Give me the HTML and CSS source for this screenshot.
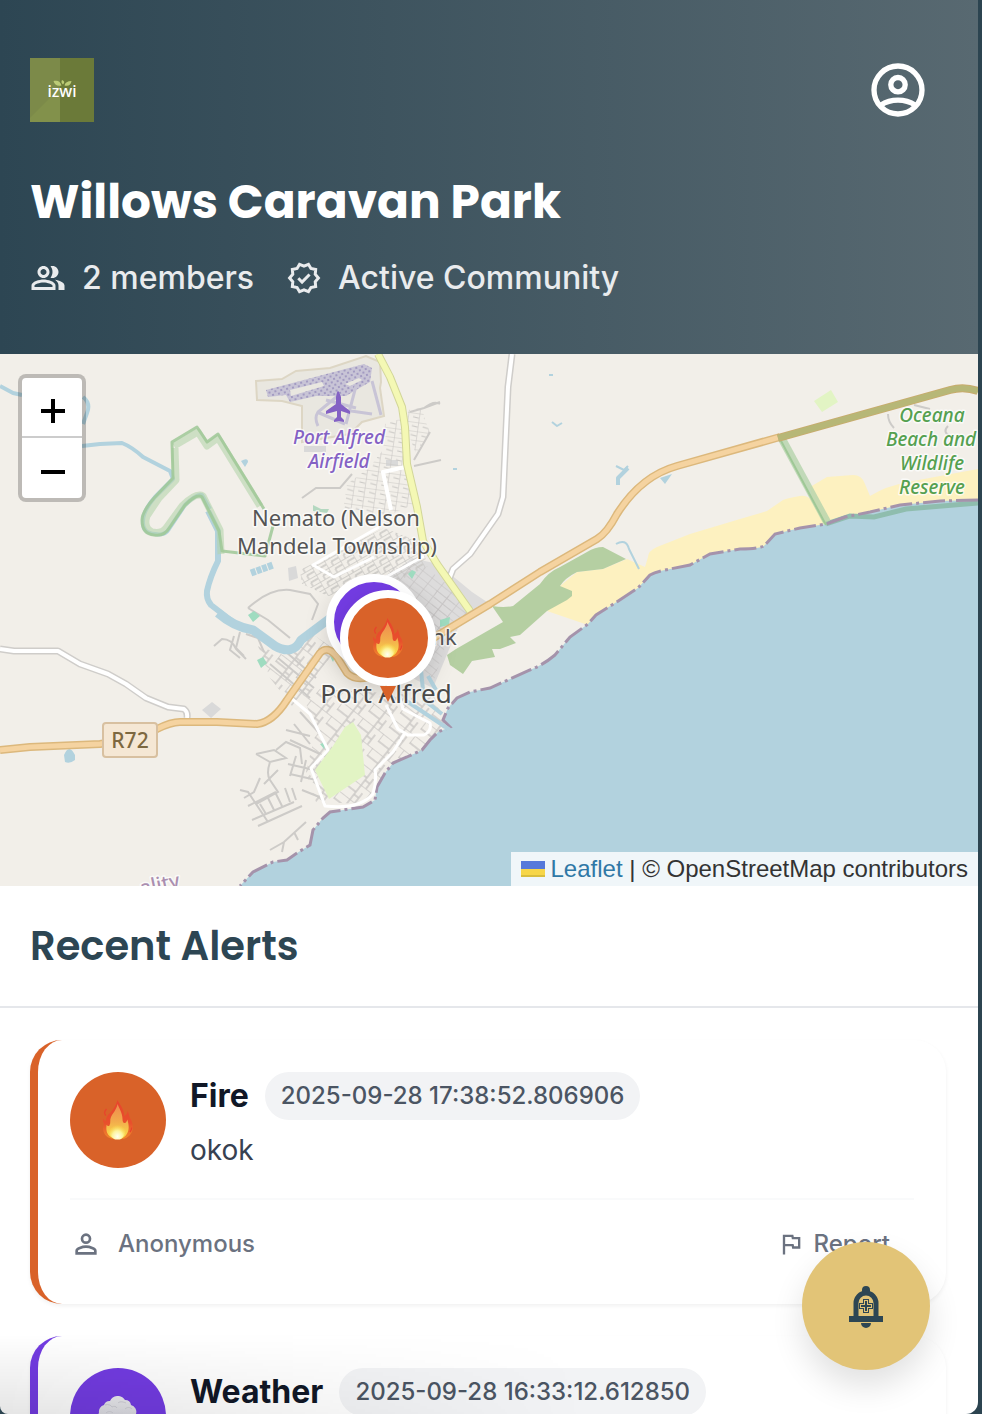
FILE: index.html
```html
<!DOCTYPE html>
<html lang="en">
<head>
<meta charset="utf-8">
<meta name="viewport" content="width=device-width, initial-scale=1">
<title>Willows Caravan Park</title>
<link rel="stylesheet" href="styles.css">
</head>
<body>
<svg class="defs" width="0" height="0" aria-hidden="true">
  <defs>
    <linearGradient id="flameOuter" x1="0" y1="0" x2="0" y2="1">
      <stop offset="0" stop-color="#e8442c"/><stop offset=".6" stop-color="#e8502c"/><stop offset="1" stop-color="#f08a2c"/>
    </linearGradient>
    <linearGradient id="flameInner" x1="0" y1="0" x2="0" y2="1">
      <stop offset="0" stop-color="#ee8a4e"/><stop offset=".5" stop-color="#f2ab4c"/><stop offset="1" stop-color="#fbe04a"/>
    </linearGradient>
    <radialGradient id="flameCore" cx=".5" cy=".85" r=".6">
      <stop offset="0" stop-color="#fffff0"/><stop offset=".5" stop-color="#fdf39a"/><stop offset="1" stop-color="#fbe04a" stop-opacity="0"/>
    </radialGradient>
    <linearGradient id="cloudFill" x1="0" y1="0" x2="0" y2="1">
      <stop offset="0" stop-color="#ececef"/><stop offset="1" stop-color="#d4d4dc"/>
    </linearGradient>
    <symbol id="flame" viewBox="0 0 32 40">
      <path fill="url(#flameOuter)" d="M15.500 0C17 4 22 8 22.500 16c2-1 3-3 3.200-5.200 1.500 4 1.300 6 3.300 9 3.500 7 2.500 16-7 19H10C1 37 0 29 2 24c-1-2-1.200-4-.8-5.500.8 1.600 1.500 2.200 2.600 2.800C4 17 5.500 15 8 13c3-3.500 5.500-6 7.500-13z"/>
      <path fill="none" stroke="#e8442c" stroke-width="1.300" d="M4.500 9c-3 3-2 5-.7 6.500M28 32c1-1.300 1.600-2.800 1.700-4.500"/>
      <path fill="url(#flameInner)" d="M15.500 4c1.500 4 5 9 5 15 0 2 .5 4 2 4 1.500.2 2.500-2 2.700-3.500 2 5 3.500 15-5.700 19h-7C4.500 36 4 31 4.500 25c1 1 2 1.500 3 .5C9 23 7.500 20 9 17c1.500-3.500 5.500-7 6.500-13z"/>
      <path fill="url(#flameCore)" d="M15.500 20c1.500 3 3 5.500 4.500 6 2 0 3-1 4-2 .5 7-1 13-6 15.500h-5C8 37 6 33 7 27c2 1.500 3.500.5 5-1 1.500-2 2.500-4 3.500-6z"/>
    </symbol>
    <symbol id="cloud" viewBox="0 0 40 40">
      <path fill="url(#cloudFill)" d="M5 28a7 7 0 0 1-4-11 7 7 0 0 1 5-8 6 6 0 0 1 6-4A8.500 8.500 0 0 1 27 4a6 6 0 0 1 6 5 7 7 0 0 1 5 9c3 4 1 10-4 10z"/>
      <path fill="none" stroke="#cdcdd4" d="M7 9c3-1 6 0 7 2 2-1 4-1 5 1M20 7c2-2 6-1 8 0M27 13c2-2 5-2 7 0M8 17c2-2 5-2 7 0"/>
    </symbol>
  </defs>
</svg>

<div class="app">
  <header class="hero">
    <div class="hero-bar">
      <svg class="logo" viewBox="0 0 64 64" role="img" aria-label="izwi">
        <path fill="#6b7a39" d="M0 0h64v64H0z"/>
        <path fill="#7c8a49" d="M0 0h30v64H0z"/>
        <path fill="#82914b" d="M30 30v34H0v-4z"/>
        <text class="logo-text" x="32" y="39" text-anchor="middle">izwi</text>
        <path fill="#bccb76" d="M23.500 23c4-1 7 0 8 4.500-4.500 1-7-1-8-4.500zM32 22c3 1 2.500 3 1 4.500-1.500-1-2-3-1-4.500zM34.500 27.500c.5-3 3-4.500 7-4.500-.5 4-3 5.500-7 4.500z"/>
      </svg>
      <button class="profile" type="button" aria-label="Account">
        <svg viewBox="0 0 24 24" fill="none" stroke="currentColor" stroke-width="2"><circle cx="12" cy="12" r="9"/><circle cx="12" cy="10" r="2.700"/><path d="M5.500 17.700c2-1.300 4.200-1.900 6.500-1.900s4.500.6 6.500 1.900"/></svg>
      </button>
    </div>
    <h1>Willows Caravan Park</h1>
    <div class="meta">
      <span class="meta-item">
        <svg viewBox="0 0 24 24" fill="currentColor"><path d="M16.670 13.130C18.040 14.060 19 15.320 19 17v3h4v-3c0-2.180-3.570-3.470-6.330-3.870zM15 12c2.210 0 4-1.790 4-4s-1.790-4-4-4c-.47 0-.91.1-1.330.24C14.500 5.270 15 6.580 15 8s-.5 2.730-1.330 3.760c.42.14.86.24 1.330.24zM9 12c2.210 0 4-1.790 4-4s-1.790-4-4-4-4 1.790-4 4 1.790 4 4 4zm0-6c1.100 0 2 .9 2 2s-.9 2-2 2-2-.9-2-2 .9-2 2-2zM9 13c-2.670 0-8 1.340-8 4v3h16v-3c0-2.660-5.330-4-8-4zm6 5H3v-.99C3.200 16.290 6.300 15 9 15s5.800 1.290 6 2v1z"/></svg>
        2 members
      </span>
      <span class="meta-item">
        <svg viewBox="0 0 24 24" fill="none" stroke="currentColor" stroke-width="2"><path d="M21.600 12l-2.120-2.430.3-3.220-3.150-.72-1.650-2.780L12 4.120 9.020 2.850 7.380 5.630l-3.150.71.3 3.220L2.400 12l2.130 2.430-.3 3.230 3.150.71 1.640 2.780L12 19.880l2.980 1.270 1.650-2.780 3.150-.72-.3-3.220L21.600 12z"/><path d="M8.200 12.200l2.500 2.500 5-5"/></svg>
        Active Community
      </span>
    </div>
  </header>

  <section class="map" aria-label="Community map">
    <svg class="map-tiles" viewBox="0 354 978 532" preserveAspectRatio="xMidYMid slice">
      <defs>
        <pattern id="gridA" width="14" height="8" patternUnits="userSpaceOnUse" patternTransform="rotate(-30)"><path d="M0 0h14M0 0v8M6 4h8M6 4v4" fill="none" stroke="#c9c7c4" stroke-width="1.300"/></pattern>
        <pattern id="gridB" width="26" height="18" patternUnits="userSpaceOnUse" patternTransform="rotate(38)"><path d="M0 0h26M0 0v10M14 0v18M0 9h14M20 6v12M14 12h6" fill="none" stroke="#cbc9c6" stroke-width="1.500"/></pattern>
        <pattern id="gridC" width="11" height="9" patternUnits="userSpaceOnUse" patternTransform="rotate(8)"><path d="M0 0h11M0 0v9M5 4l6 1" fill="none" stroke="#c9c7c4" stroke-width="1.200"/></pattern>
        <pattern id="gridE" width="12" height="7" patternUnits="userSpaceOnUse" patternTransform="rotate(38)"><path d="M0 0h12M0 0v7" fill="none" stroke="#c4c2c2" stroke-width="1.200"/></pattern>
        <pattern id="dots" width="6" height="6" patternUnits="userSpaceOnUse" patternTransform="rotate(-12)"><path fill="#c8c4d6" d="M0 0h6v6H0z"/><path fill="#a39bc2" d="M1 1h2v2H1zM4 4h2v2H4z"/></pattern>
      </defs>
      <path fill="#f2efe9" d="M0 354h978v532H0z"/>

      <!-- built-up areas -->
      <path fill="#dddcdc" d="M412 558l26 6 34 28 18 12-32 24-25 60-25-12-4-40-28-50z"/>
      <path fill="#d9d9d9" d="M288 568l8-2 2 12-9 3zM202 710l10-8 9 7-10 9zM304 446h22v6h-22zM386 460h12v6h-12z"/>
      <path fill="url(#gridC)" d="M385 424l18-6 4 26 8 60-28 12-44-6 4-26 22-16 14-18z"/>
      <path fill="url(#gridC)" d="M408 410l14-2 3 12 5 12-14 22-9-24z"/>
      <path fill="url(#gridA)" d="M300 570l84-42 36 14 8 24-40 20-60 10-26-12z"/>
      <path fill="url(#gridE)" d="M388 570l28-10 44 34-20 38-30-14z"/>
      <path fill="url(#gridB)" d="M258 646l28 10 26-22 24 16-44 56-22-28z"/>
      <path fill="url(#gridB)" d="M300 688l70 4 64 4 12 30-24 26-46 34-12 18-48-2-10-30 10-42z"/>
      <path fill="url(#gridE)" d="M436 590l40 18-22 22-10 20-10 30-20-20z"/>
      <g fill="none" stroke="#cdcbc8" stroke-width="2">
        <path d="M302 498l14-10h24l12-14M248 608q22-20 42-18l20 4 8 10-6 16M248 608l20 12 22 18"/>
        <path d="M410 412l14-4 16-6M424 408q10-8 16-4M430 432l-16 28M414 466l27-6"/>
        <path d="M214 646l8-7q10 0 14 10l10 10M234 636l-4 14 10 8M240 632l-4 16 8 8M246 634l12 4 6 14"/>
        <path d="M270 664l40 34M278 658l36 30M286 652l30 26"/>
        <path d="M256 754l18-4 12 8-16 4-14-8M276 750l10-8 14 6 2 16M270 762q-4 12 0 18l8 12-22 12M240 790l8 2 20 30M244 798l10-6 6-14M248 806l28-14M252 820l42-18M258 826l44-20M266 814l-6-10M274 810l-6-12M282 806l-6-12M290 802l-5-14M296 800l-4-12M278 770l-14 14M270 850l14-8 22-20M284 842l-2 10M294 832l4 8"/>
        <path d="M290 740l30 14M286 730l24 6M294 724l16 20M300 712l20 22M288 764l26 6M290 774l26 6M296 756l-6 20M306 760l-5 22M302 790l20 8"/>
      </g>
      <path fill="#e2f4c4" d="M345 727l8-5 8 13 4 40-36 24-14-29 18-24zM814 401l17-11 7 12-16 10z"/>
      <path fill="#9fdcc0" d="M248 615l6-4 6 5-7 6zM257 660l6-3 4 6-6 5zM408 574l4-4 4 2-4 7zM440 620l10-3-1 8-9 2zM330 656l5 1-2 5zM320 744l6-2-2 7z"/>
      <path fill="#b4d8c0" d="M313 505l8 4h8l-2 4-14-2z"/>

      <!-- airfield -->
      <path fill="#e9e7e0" stroke="#ddd6c4" stroke-width="2" d="M256 381l26-2 14-8 34-3 36-12 14 6 1 20-1 6 4 28-22 6-12 12-48 8v-36l-20-5-25-1z"/>
      <path fill="url(#dots)" d="M266 390l98-26 8 4-2 14-14 8-10 6-30 0-26 6-4-7-18 2z"/>
      <path fill="#e9e7e0" d="M290 390l32-8 2 4-33 10zM345 384l14-6 3 2-12 6z"/>
      <path fill="none" stroke="#c8c4d6" stroke-width="3" d="M372 381l9 34M356 386l-10 38M340 394l-22 18q-4 6 0 14M317 412l28 12M344 410l28 4M326 400l30 8"/>
      <path fill="#8461c4" d="M336 397q1-6 2-6t3 6v7l9 7v3l-9-3v6l3 3v2l-5-1-5 1v-2l3-3v-6l-11 3v-3l10-7z"/>

      <!-- coast -->
      <path fill="#fdf1c0" d="M978 469l-38 7-32 6q-22 4-38 14l-5-12q-3-9-12-9l-26 2-17 10 3 14q-6-6-13-5-12 2-17 4l-16 11-27 8-50 15-33 13q-9 4-9 10l-3 10-18-8-24 10-26 3-17 14 12 8-25 17 41 14 70-20 200-60 120-30z"/>
      <path fill="#b5cfa2" d="M492 606q12 2 21 0l27-22q8-12 20-17l27-15q8-5 16-5l23 12-23 10-26 3q-12 6-17 14l12 5v5l-5 4-20 11-27 24-10 2 6 6-16 6h-8l3 8-23 4-9 13-13-9-3-10 9-6 47-27z"/>
      <path fill="#b2d2de" d="M978 500l-38 1-40 4-30 7-25 5-19 7-26 4-25 6-10 11q-4 4-25 4l-30 5-20 11-25 5q-10 2-15 5l-12 13-23 15-19 12-8 9-18 13-15 18q-12 10-25 15l-40 18-20 4-13 6-9 10-5 12 7 7-12 5-8 8-8 10-15 7-14 6-8 10-8 14-2 13-12 7-33 5-7 6-10 12-3 15-13 8-10 7-14 2-20 10-13 14h738z"/>
      <path fill="none" stroke="#8fbdae" stroke-width="5" d="M826 524l24-8 24 1 32-8 72-6"/>
      <path fill="none" stroke="#a593ab" stroke-width="3" stroke-dasharray="22 4 3 4" d="M978 500l-38 1-40 4-30 7-25 5-19 7-26 4-25 6-10 11q-4 4-25 4l-30 5-20 11-25 5q-10 2-15 5l-12 13-23 15-19 12-8 9-18 13-15 18q-12 10-25 15l-40 18-20 4-13 6-9 10-5 12 7 7-12 5-8 8-8 10-15 7-14 6-8 10-8 14-2 13-12 7-33 5-7 6-10 12-3 15-13 8-10 7-14 2-20 10-13 14"/>

      <!-- water -->
      <g fill="none" stroke="#b2d2de" stroke-width="4" stroke-linejoin="round">
        <path d="M0 386l13 7 9 2M83 397q8 6 4 16l-4 11M82 446l18-2 22-1q10 4 21 14l27 14 3 8-18 18q-12 14-12 24-1 12 12 13 10 2 14-5l16-24q12-12 17-10l8 14"/>
        <path stroke-width="6" d="M208 511l10 20v30q-8 16-11 30-1 8 4 14l22 17"/>
        <path stroke-width="9" d="M218 613q16 14 35 17l22 16q18 10 26-6l32-24"/>
        <path d="M405 700l45 30M420 660l4 40 18 14M428 676l8 14"/>
        <path stroke-width="2" d="M616 544q10-6 13 5l10 20M616 466l8 4 4-4M552 422l5 4 5-3M549 375h4M453 469h4"/>
        <path d="M628 468l-10 10v7"/>
        <path stroke-width="7" stroke-dasharray="5 1" d="M251 573l22-8"/>
      </g>
      <path fill="#b2d2de" d="M64 755q5-12 11 0v5q-5 4-10 2zM660 478l12-4-7 10zM241 461q7-4 7 1l-3 5z"/>

      <!-- reserve borders -->
      <path fill="none" stroke="#b4d3ab" stroke-opacity=".6" stroke-width="7" stroke-linejoin="round" d="M174 446l24-14 9 14 11-8 42 68M175 448l1 32-17 18-12 18q-4 12 5 16 10 2 14-4l16-22q14-14 21-10l17 34 1 24"/>
      <path fill="none" stroke="#9fc896" stroke-opacity=".85" stroke-width="3" stroke-linejoin="round" d="M264 509l-46-75-11 8-10-15-25 15 1 36-19 20q-12 14-12 22 0 14 12 15 10 2 16-8l15-22q12-12 17-8l17 34 3 20 43 5 8-30"/>
      <path stroke="#b4d3ab" stroke-opacity=".8" stroke-width="8" d="M782 439l45 83"/>
      <path stroke="#9fc896" stroke-width="2" d="M780 439l46 86"/>

      <!-- roads -->
      <g fill="none" stroke-linejoin="round">
        <path stroke="#cfcdca" stroke-width="7" d="M512 354l-4 33-5 110-5 17-28 40-17 15-5 13M0 649l14 2h44l22 13 28 10 18 10 20 14 22 9 16 2q4 3 3 9"/>
        <path stroke="#fff" stroke-width="4" d="M512 354l-4 33-5 110-5 17-28 40-17 15-5 13M0 649l14 2h44l22 13 28 10 18 10 20 14 22 9 16 2q4 3 3 9M391 510l-8-38 22-5"/>
        <path stroke="#fff" stroke-width="3" d="M379 527l-66 38 21 12 40-20M384 578l40-22M291 698l19 16 18 36-17 18 14 38q34 4 48-12 4-14 2-24l18-18 12-19M386 705l12 24 10 6h16q8-4 6-12l-27-14-4-14"/>
        <path stroke="#d2d699" stroke-width="8" d="M378 354l12 23 12 30 3 20 2 37 10 43 6 34 14 23 33 47"/>
        <path stroke="#f4f8b4" stroke-width="6" d="M378 354l12 23 12 30 3 20 2 37 10 43 6 34 14 23 33 47"/>
        <path stroke="#dcb87c" stroke-width="8" d="M0 750l30-3 70-3q30-4 57-15 14-7 23-7h37l40 2q16-2 30-24l33-47q8-8 17 4l10 16q10 10 30 1M430 640l60-36 50-32 57-33q10-6 20-25 24-38 60-48l103-29"/>
        <path stroke="#f5d3a0" stroke-width="5" d="M0 750l30-3 70-3q30-4 57-15 14-7 23-7h37l40 2q16-2 30-24l33-47q8-8 17 4l10 16q10 10 30 1M430 640l60-36 50-32 57-33q10-6 20-25 24-38 60-48l103-29"/>
        <path stroke="#c9ab6d" stroke-width="8" d="M778 438l172-48q14-4 28 1"/>
        <path stroke="#b7b777" stroke-width="6" d="M778 438l172-48q14-4 28 1"/>
        <path stroke="#cdcbc8" stroke-width="2" d="M888 414q0 8 6 14M914 405l16 4M948 426q-6 6 2 10"/>
      </g>

      <!-- labels -->
      <g class="map-label" text-anchor="middle">
        <g class="airfield"><text x="339" y="444">Port Alfred</text><text x="339" y="468">Airfield</text></g>
        <g class="suburb"><text x="336" y="526">Nemato (Nelson</text><text x="337" y="554">Mandela Township)</text><text x="444" y="645">nk</text></g>
        <text class="town" x="386" y="703">Port Alfred</text>
        <g class="reserve"><text x="932" y="422">Oceana</text><text x="931" y="446">Beach and</text><text x="932" y="470">Wildlife</text><text x="932" y="494">Reserve</text></g>
        <text class="boundary" x="161" y="891" transform="rotate(-12 161 891)">ality</text>
        <rect x="103" y="723" width="54" height="34" rx="3" fill="#f5e7d4" stroke="#d8c0a0" stroke-width="2"/>
        <text class="shield" x="130" y="748">R72</text>
      </g>
    </svg>

    <div class="zoom">
      <button type="button" aria-label="Zoom in"><svg viewBox="0 0 24 24"><path d="M12 0v24M0 12h24"/></svg></button>
      <button type="button" aria-label="Zoom out"><svg viewBox="0 0 24 24"><path d="M0 12h24"/></svg></button>
    </div>

    <button class="pin pin-weather" type="button" aria-label="Weather alert"></button>
    <button class="pin pin-fire" type="button" aria-label="Fire alert"><svg class="emoji"><use href="#flame"/></svg></button>

    <div class="attribution">
      <svg class="flag" viewBox="0 0 24 16"><path fill="#5679da" d="M0 0h24v8H0z"/><path fill="#f7d648" d="M0 8h24v6H0z"/><path fill="#d9be3d" d="M0 14h24v2H0z"/></svg>
      <span><a href="#leaflet">Leaflet</a> | © OpenStreetMap contributors</span>
    </div>
  </section>

  <main class="alerts">
    <h2>Recent Alerts</h2>
    <div class="list">
      <article class="card fire">
        <div class="card-body">
          <div class="avatar"><svg class="emoji"><use href="#flame"/></svg></div>
          <div class="card-text">
            <div class="card-title"><h3>Fire</h3><time class="stamp">2025-09-28 17:38:52.806906</time></div>
            <p>okok</p>
          </div>
        </div>
        <footer class="card-foot">
          <span class="author"><svg viewBox="0 0 24 24" fill="none" stroke="currentColor" stroke-width="2"><circle cx="12" cy="8" r="3"/><path d="M5 19v-2c0-1.500 4-3 7-3s7 1.500 7 3v2z"/></svg>Anonymous</span>
          <button class="report" type="button"><svg viewBox="0 0 24 24" fill="currentColor"><path d="M12.360 6l.4 2H18v6h-3.360l-.4-2H7V6h5.360M14 4H5v17h2v-7h5.600l.4 2h7V6h-5.600L14 4z"/></svg>Report</button>
        </footer>
      </article>
      <article class="card weather">
        <div class="card-body">
          <div class="avatar"><svg class="emoji cloud"><use href="#cloud"/></svg></div>
          <div class="card-text">
            <div class="card-title"><h3>Weather</h3><time class="stamp">2025-09-28 16:33:12.612850</time></div>
          </div>
        </div>
      </article>
    </div>
  </main>

  <button class="fab" type="button" aria-label="Add alert">
    <svg viewBox="0 0 36 44"><path fill="none" stroke="currentColor" stroke-width="5" d="M8 33V19a10 10 0 0 1 20 0v14"/><path fill="currentColor" d="M14 9V6a4 4 0 0 1 8 0v3zM1 32h34v6H1zM13 39h10a5 5 0 0 1-10 0z"/><path fill="none" stroke="currentColor" stroke-width="6" d="M18 15v14M11 22h14"/><path fill="none" stroke="#e2c477" stroke-width="4" d="M18 16v12M12 22h12"/><path fill="none" stroke="currentColor" stroke-width="2" d="M18 17v10M13 22h10"/></svg>
  </button>
</div>
</body>
</html>
```

FILE: styles.css
```css
* { box-sizing: border-box; }

body {
  margin: 0;
  padding-right: 4px;
  background: #2c4450;
  color: #111827;
  font-family: Inter, "Liberation Sans", sans-serif;
}

button { margin: 0; padding: 0; border: 0; background: none; color: inherit; font: inherit; cursor: pointer; }
h1, h2, h3, p { margin: 0; }
svg { display: block; flex: none; }
.defs { position: absolute; }

.app {
  position: relative;
  height: 100vh;
  overflow: hidden;
  background: #fff;
  border-radius: 0 0 12px 8px;
}
.app::after {
  content: "";
  position: absolute;
  inset: auto 0 0 0;
  height: 80px;
  background: linear-gradient(to top, rgba(0, 0, 0, .1), transparent);
  mask-image: linear-gradient(to right, #000, transparent 60%);
  pointer-events: none;
}

/* Header */
.hero {
  padding: 58px 48px 52px 30px;
  background: linear-gradient(to right, #2d4653, #586971);
  color: #fff;
}
.hero-bar { display: flex; align-items: center; justify-content: space-between; }
.logo { width: 64px; height: 64px; }
.logo-text { fill: #fff; font: 500 16px "Noto Sans", sans-serif; }
.profile svg { width: 64px; height: 64px; }
.hero h1 {
  margin-top: 48px;
  font: 700 47px/64px Poppins, Inter, sans-serif;
}
.meta {
  display: flex;
  flex-wrap: wrap;
  gap: 32px;
  margin-top: 20px;
  color: #e9ebed;
  font-size: 32px;
  font-weight: 500;
  line-height: 48px;
}
.meta-item { display: flex; align-items: center; gap: 16px; }
.meta svg { width: 36px; height: 36px; }

/* Map */
.map { position: relative; aspect-ratio: 978 / 532; overflow: hidden; background: #f2efe9; }
.map-tiles { width: 100%; height: 100%; }
.map-label { font-family: "Noto Sans", sans-serif; font-weight: 500; stroke-linejoin: round; }
.map-label text { paint-order: stroke; stroke: rgba(255, 255, 255, .7); stroke-width: 3px; }
.airfield { fill: #8461c4; font-size: 19px; font-style: italic; }
.suburb { fill: #555; font-size: 22px; font-weight: 400; }
.town { fill: #4a4a4a; font-size: 26px; font-weight: 400; }
.reserve { fill: #55a050; font-size: 19px; font-style: italic; }
.boundary { fill: #ab8fb0; font-size: 20px; }
.map-label .shield { fill: #7d6840; stroke: none; font-size: 21px; }

.zoom {
  position: absolute;
  top: 20px;
  left: 18px;
  border: 4px solid rgba(0, 0, 0, .22);
  border-radius: 8px;
  background: #fff;
  background-clip: padding-box;
}
.zoom button { display: grid; place-items: center; width: 60px; height: 60px; padding: 8px 0 0 2px; }
.zoom button:first-child { border-bottom: 2px solid #ccc; }
.zoom svg { width: 24px; height: 24px; fill: none; stroke: #000; stroke-width: 4px; }

.pin {
  position: absolute;
  display: grid;
  place-items: center;
  width: 96px;
  height: 96px;
  border: 8px solid #fff;
  border-radius: 50%;
  box-shadow: 0 8px 24px rgba(0, 0, 0, .12);
}
.pin-weather { left: 326px; top: 220px; background: #733ce2; }
.pin-fire { left: 340px; top: 236px; background: #d96229; }
.pin-fire::after {
  content: "";
  position: absolute;
  top: 88px;
  border: 8px solid transparent;
  border-top: 16px solid #d96229;
  border-bottom: 0;
}
.emoji { width: 32px; height: 40px; }
.emoji.cloud { width: 40px; }

.attribution {
  position: absolute;
  right: 0;
  bottom: 0;
  display: flex;
  align-items: center;
  gap: 6px;
  padding: 0 10px;
  background: rgba(255, 255, 255, .8);
  color: #333;
  font: 24px/34px "Helvetica Neue", "Liberation Sans", Arial, sans-serif;
  white-space: nowrap;
}
.attribution a { color: #2f78a6; text-decoration: none; }
.flag { width: 24px; height: 16px; }

/* Alerts */
.alerts h2 {
  padding: 30px;
  border-bottom: 2px solid #e5e7eb;
  color: #2d4653;
  font: 600 40px/60px Poppins, Inter, sans-serif;
}
.list { display: grid; gap: 32px; padding: 32px 32px 32px 30px; }
.card {
  padding: 32px;
  border-left: 8px solid;
  border-radius: 32px;
  background: #fff;
  box-shadow: 0 2px 4px rgba(0, 0, 0, .06);
}
.fire { border-color: #d96229; }
.weather { border-color: #733ce2; }
.card-body { display: flex; gap: 24px; padding-bottom: 26px; }
.avatar {
  display: grid;
  place-items: center;
  flex: none;
  width: 96px;
  height: 96px;
  border-radius: 50%;
}
.fire .avatar { background: #d96229; }
.weather .avatar { background: #733ce2; }
.card-title { display: flex; align-items: center; gap: 16px; }
.card-title h3 { font-size: 32px; font-weight: 700; line-height: 48px; }
.stamp {
  padding: 0 16px;
  border-radius: 24px;
  background: #f2f3f5;
  color: #4b5563;
  font-size: 24px;
  font-weight: 500;
  line-height: 48px;
}
.card-text p { margin-top: 8px; color: #374151; font-size: 28px; line-height: 44px; }
.card-foot {
  display: flex;
  align-items: center;
  justify-content: space-between;
  padding-top: 16px;
  border-top: 2px solid #f9fafb;
  color: #6b7280;
  font-size: 24px;
  font-weight: 500;
  line-height: 56px;
}
.author { display: flex; align-items: center; gap: 16px; }
.author svg { width: 32px; height: 32px; }
.report { display: flex; align-items: center; gap: 8px; padding-right: 24px; }
.report svg { width: 28px; height: 28px; }

.fab {
  position: absolute;
  right: 48px;
  bottom: 44px;
  display: grid;
  place-items: center;
  width: 128px;
  height: 128px;
  border-radius: 50%;
  background: #e2c477;
  color: #2d4653;
  box-shadow: 0 16px 32px rgba(0, 0, 0, .12);
}
.fab svg { width: 36px; height: 44px; }
```
